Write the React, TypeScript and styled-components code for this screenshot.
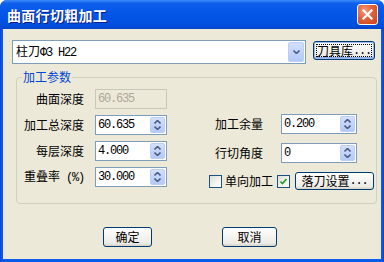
import React from 'react';
import styled, { createGlobalStyle } from 'styled-components';

const GlobalStyle = createGlobalStyle`
  html, body {
    margin: 0;
    padding: 0;
    background: #ffffff;
  }
  body {
    font-family: "Noto Sans CJK SC", "Liberation Sans", sans-serif;
    font-size: 12px;
    color: #000000;
  }
  * {
    box-sizing: border-box;
  }
`;

const Window = styled.div`
  width: 384px;
  height: 262px;
  display: flex;
  flex-direction: column;
  background: linear-gradient(to right, #0B3CD8 0, #0A5BEA 2px, #0A5BEA 382px, #0B3CD8 384px);
  border-radius: 7px 7px 0 0;
  overflow: hidden;
`;

const TitleBar = styled.div`
  height: 29px;
  flex: none;
  display: flex;
  align-items: center;
  padding: 0 6px 0 7px;
  background: linear-gradient(
    to bottom,
    #3C8CF8 0%,
    #0F5FEC 12%,
    #0457E8 40%,
    #0253E4 70%,
    #024DD9 90%,
    #0344C8 100%
  );
`;

const Title = styled.span`
  font-size: 14px;
  font-weight: bold;
  color: #ffffff;
  letter-spacing: 0.3px;
  text-shadow: 1px 1px 0 #0A1A8C;
  line-height: 16px;
  margin-top: 1px;
`;

const CloseButton = styled.div`
  margin-left: auto;
  width: 21px;
  height: 21px;
  border: 1px solid #ffffff;
  border-radius: 3px;
  background: radial-gradient(circle at 35% 30%, #F29A7A 0%, #E2623A 45%, #C6401A 100%);
  display: flex;
  align-items: center;
  justify-content: center;
`;

const Client = styled.div`
  flex: 1;
  margin: 0 3px 3px 3px;
  background: #ECE9D8;
  padding: 11px 6px 0 9px;
  display: flex;
  flex-direction: column;
`;

const TopRow = styled.div`
  display: flex;
  align-items: flex-start;
  gap: 7px;
`;

const Combo = styled.div`
  width: 294px;
  height: 24px;
  border: 1px solid #7F9DB9;
  background: #ffffff;
  display: flex;
  align-items: center;
  padding: 1px 1px 1px 3px;
`;

const ComboText = styled.div`
  flex: 1;
  font-size: 12px;
  line-height: 14px;
`;

const Mono = styled.span`
  font-family: "Liberation Mono", "DejaVu Sans Mono", monospace;
  font-size: 12px;
  letter-spacing: -1.2px;
`;

const ArrowButton = styled.div<{ $w?: number; $h?: number }>`
  width: ${(p) => p.$w ?? 16}px;
  height: ${(p) => p.$h ?? 20}px;
  flex: none;
  border: 1px solid #BCCEF6;
  border-radius: 2px;
  background: linear-gradient(to bottom, #D3E0FB 0%, #C2D4FA 50%, #B4C9F6 100%);
  display: flex;
  flex-direction: column;
  align-items: center;
  justify-content: center;
  gap: 2px;
`;

const Button = styled.div<{ $w: number; $h?: number; $default?: boolean }>`
  width: ${(p) => p.$w}px;
  height: ${(p) => p.$h ?? 20}px;
  flex: none;
  border: 1px solid #003C74;
  border-radius: 3px;
  background: linear-gradient(to bottom, #FFFFFF 0%, #F6F5F1 40%, #ECEBE6 85%, #D6D0C5 100%);
  box-shadow: ${(p) =>
    p.$default ? 'inset 0 0 0 1px #9DB9EB, inset 0 -1px 0 1px #8CAAE6' : 'none'};
  display: flex;
  align-items: center;
  justify-content: center;
  font-size: 12px;
  line-height: 14px;
  position: relative;
`;

const FocusRing = styled.div`
  position: absolute;
  inset: 2px;
  border: 1px dotted #000000;
`;

const Group = styled.fieldset`
  margin: 6px 0 0 4px;
  width: 361px;
  height: 134px;
  border: 1px solid #D0D0BF;
  border-radius: 4px;
  padding: 0;
  min-width: 0;
`;

const Legend = styled.legend`
  color: #0046D5;
  font-size: 12px;
  line-height: 14px;
  margin-left: 5px;
  padding: 0 1px;
`;

const GroupBody = styled.div`
  display: flex;
`;

const Column = styled.div<{ $top: number; $gap: number; $w?: number }>`
  display: flex;
  flex-direction: column;
  padding-top: ${(p) => p.$top}px;
  gap: ${(p) => p.$gap}px;
  width: ${(p) => (p.$w ? `${p.$w}px` : 'auto')};
`;

const Row = styled.div`
  display: flex;
  align-items: center;
  height: 20px;
`;

const Label = styled.div<{ $w: number; $right?: boolean }>`
  width: ${(p) => p.$w}px;
  margin-right: ${(p) => (p.$right ? 11 : 0)}px;
  text-align: ${(p) => (p.$right ? 'right' : 'left')};
  padding-left: ${(p) => (p.$right ? 0 : 6)}px;
  font-size: 12px;
  line-height: 14px;
  white-space: nowrap;
`;

const Field = styled.div<{ $w: number; $disabled?: boolean }>`
  width: ${(p) => p.$w}px;
  height: 20px;
  border: 1px solid ${(p) => (p.$disabled ? '#C9C7BA' : '#7F9DB9')};
  background: ${(p) => (p.$disabled ? '#ECE9D8' : '#ffffff')};
  color: ${(p) => (p.$disabled ? '#ACA899' : '#000000')};
  display: flex;
  align-items: center;
  padding: 1px 1px 1px 2px;
  font-family: "Liberation Mono", "DejaVu Sans Mono", monospace;
  font-size: 12px;
  letter-spacing: -1.2px;
`;

const FieldText = styled.div`
  flex: 1;
  line-height: 14px;
`;

const CheckRow = styled.div`
  display: flex;
  align-items: center;
  height: 18px;
`;

const Checkbox = styled.div`
  width: 13px;
  height: 13px;
  flex: none;
  border: 1px solid #1C5180;
  background: linear-gradient(135deg, #DCDCD7 0%, #F4F4F2 60%, #FFFFFF 100%);
  display: flex;
  align-items: center;
  justify-content: center;
`;

const CheckText = styled.span`
  margin: 0 4px 0 3px;
  font-size: 12px;
  line-height: 14px;
`;

const Footer = styled.div`
  display: flex;
  margin-top: 23px;
  padding-left: 91px;
  gap: 70px;
`;

const Chevron: React.FC<{ up?: boolean }> = ({ up }) => (
  <svg width="7" height="4" viewBox="0 0 7 4">
    <path
      d={up ? 'M0.5 3.5 L3.5 0.5 L6.5 3.5' : 'M0.5 0.5 L3.5 3.5 L6.5 0.5'}
      fill="none"
      stroke="#4D6185"
      strokeWidth="1.6"
    />
  </svg>
);

const Spinner = () => (
  <ArrowButton $w={15} $h={16}>
    <Chevron up />
    <Chevron />
  </ArrowButton>
);

const NumField: React.FC<{ value: string; w: number; disabled?: boolean }> = ({ value, w, disabled }) => (
  <Field $w={w} $disabled={disabled}>
    <FieldText>{value}</FieldText>
    {!disabled && <Spinner />}
  </Field>
);

const leftRows = [
  { label: '曲面深度', value: '60.635', disabled: true },
  { label: '加工总深度', value: '60.635' },
  { label: '每层深度', value: '4.000' },
  { label: '重叠率', suffix: ' (%)', value: '30.000' },
];

const rightRows = [
  { label: '加工余量', value: '0.200' },
  { label: '行切角度', value: '0' },
];

const App: React.FC = () => (
  <>
    <GlobalStyle />
    <Window>
      <TitleBar>
        <Title>曲面行切粗加工</Title>
        <CloseButton>
          <svg width="11" height="11" viewBox="0 0 11 11">
            <path d="M1.5 1.5 L9.5 9.5 M9.5 1.5 L1.5 9.5" stroke="#ffffff" strokeWidth="2.2" strokeLinecap="square" />
          </svg>
        </CloseButton>
      </TitleBar>
      <Client>
        <TopRow>
          <Combo>
            <ComboText>
              柱刀<Mono>Φ3 H22</Mono>
            </ComboText>
            <ArrowButton>
              <Chevron />
            </ArrowButton>
          </Combo>
          <Button $w={62} $h={19} $default style={{ marginTop: 1 }}>
            <FocusRing />
            刀具库<Mono>...</Mono>
          </Button>
        </TopRow>

        <Group>
          <Legend>加工参数</Legend>
          <GroupBody>
            <Column $top={5} $gap={6} $w={192}>
              {leftRows.map((r) => (
                <Row key={r.label}>
                  <Label $w={67} $right>
                    {r.label}
                    {r.suffix && <Mono>{r.suffix}</Mono>}
                  </Label>
                  <NumField value={r.value} w={72} disabled={r.disabled} />
                </Row>
              ))}
            </Column>
            <Column $top={30} $gap={9}>
              {rightRows.map((r) => (
                <Row key={r.label}>
                  <Label $w={72}>{r.label}</Label>
                  <NumField value={r.value} w={76} />
                </Row>
              ))}
              <CheckRow>
                <Checkbox />
                <CheckText>单向加工</CheckText>
                <Checkbox>
                  <svg width="7" height="7" viewBox="0 0 7 7">
                    <path d="M0.5 3.5 L2.5 5.5 L6.5 1" fill="none" stroke="#21A121" strokeWidth="1.6" />
                  </svg>
                </Checkbox>
                <Button $w={79} $h={18} style={{ marginLeft: 5 }}>
                  落刀设置<Mono>...</Mono>
                </Button>
              </CheckRow>
            </Column>
          </GroupBody>
        </Group>

        <Footer>
          <Button $w={49}>确定</Button>
          <Button $w={55}>取消</Button>
        </Footer>
      </Client>
    </Window>
  </>
);

export default App;
